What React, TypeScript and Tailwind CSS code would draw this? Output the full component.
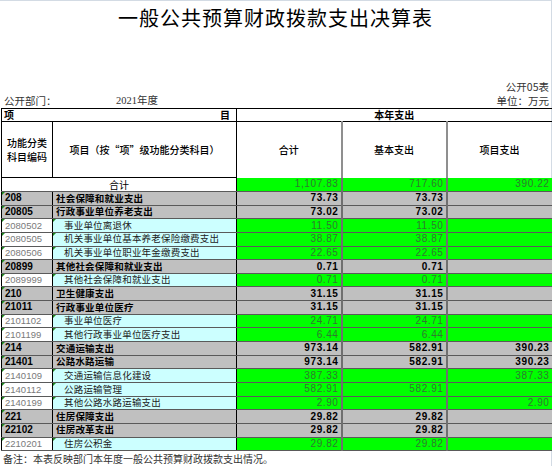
import React from "react";

type Row = {
  code: string;
  name: string;
  total: string;
  basic: string;
  project: string;
  kind: "group" | "item";
};

const rows: Row[] = [
  { code: "208", name: "社会保障和就业支出", total: "73.73", basic: "73.73", project: "", kind: "group" },
  { code: "20805", name: "行政事业单位养老支出", total: "73.02", basic: "73.02", project: "", kind: "group" },
  { code: "2080502", name: "事业单位离退休", total: "11.50", basic: "11.50", project: "", kind: "item" },
  { code: "2080505", name: "机关事业单位基本养老保险缴费支出", total: "38.87", basic: "38.87", project: "", kind: "item" },
  { code: "2080506", name: "机关事业单位职业年金缴费支出", total: "22.65", basic: "22.65", project: "", kind: "item" },
  { code: "20899", name: "其他社会保障和就业支出", total: "0.71", basic: "0.71", project: "", kind: "group" },
  { code: "2089999", name: "其他社会保障和就业支出", total: "0.71", basic: "0.71", project: "", kind: "item" },
  { code: "210", name: "卫生健康支出", total: "31.15", basic: "31.15", project: "", kind: "group" },
  { code: "21011", name: "行政事业单位医疗", total: "31.15", basic: "31.15", project: "", kind: "group" },
  { code: "2101102", name: "事业单位医疗", total: "24.71", basic: "24.71", project: "", kind: "item" },
  { code: "2101199", name: "其他行政事业单位医疗支出", total: "6.44", basic: "6.44", project: "", kind: "item" },
  { code: "214", name: "交通运输支出", total: "973.14", basic: "582.91", project: "390.23", kind: "group" },
  { code: "21401", name: "公路水路运输", total: "973.14", basic: "582.91", project: "390.23", kind: "group" },
  { code: "2140109", name: "交通运输信息化建设", total: "387.33", basic: "", project: "387.33", kind: "item" },
  { code: "2140112", name: "公路运输管理", total: "582.91", basic: "582.91", project: "", kind: "item" },
  { code: "2140199", name: "其他公路水路运输支出", total: "2.90", basic: "", project: "2.90", kind: "item" },
  { code: "221", name: "住房保障支出", total: "29.82", basic: "29.82", project: "", kind: "group" },
  { code: "22102", name: "住房改革支出", total: "29.82", basic: "29.82", project: "", kind: "group" },
  { code: "2210201", name: "住房公积金", total: "29.82", basic: "29.82", project: "", kind: "item" },
];

// 单元格左上角的小绿三角（Excel 提示标记）
function Mark() {
  return (
    <span className="absolute left-0 top-0 w-0 h-0 border-t-[3px] border-r-[3px] border-t-[#1f8a1f] border-r-transparent" />
  );
}

function NumCell({ value, kind, last }: { value: string; kind: Row["kind"]; last?: boolean }) {
  const bg = kind === "group" ? "bg-[#c0c0c0]" : "bg-[#00ff00]";
  const txt = kind === "group" ? "font-bold text-black" : "text-[#2f7a2f]";
  return (
    <td
      className={`${bg} ${txt} border-b border-b-[#5a5a5a] ${last ? "" : "border-r-2 border-r-[#6f6f6f]"} text-right pr-[2px] font-['Liberation_Sans',sans-serif] text-[10px] leading-none tracking-[0.6px]`}
    >
      {value}
    </td>
  );
}

export default function App() {
  const cjk = "font-['Noto_Sans_CJK_SC',sans-serif]";

  return (
    <div className={`w-[552px] h-[466px] bg-white border-r border-t border-[#d3dbe4] ${cjk} text-black`}>
      {/* 标题 */}
      <div className="h-[34px] pt-[5px] text-center text-[20px] leading-[24px] tracking-[1px]">
        一般公共预算财政拨款支出决算表
      </div>

      <div className="h-[44px]" />

      <div className="flex justify-end pr-[2px] text-[10.5px] leading-[15px] text-[#333]">公开05表</div>
      <div className="flex items-end text-[10.5px] leading-[14px] text-[#333] pr-[2px]">
        <span className="pl-[4px] w-[116px]">公开部门：</span>
        <span className="font-['Liberation_Serif','Noto_Sans_CJK_SC',serif]">2021年度</span>
        <span className="ml-auto">单位：万元</span>
      </div>

      <table className="ml-px table-fixed border-collapse w-[550px] border-t border-l border-black">
        <colgroup>
          <col className="w-[51px]" />
          <col className="w-[184px]" />
          <col className="w-[105px]" />
          <col className="w-[105px]" />
          <col className="w-[105px]" />
        </colgroup>
        <thead>
          <tr className="h-[13px] text-[10px] leading-none font-bold">
            <td colSpan={2} className="border-r border-r-black px-[2px]">
              <div className="flex justify-between">
                <span>项</span>
                <span className="pr-[4px]">目</span>
              </div>
            </td>
            <td colSpan={3} className="text-center">本年支出</td>
          </tr>
          <tr className="h-[56px] text-[10px] leading-[14px] font-medium">
            <td className="border-t border-black border-r text-center">
              <div>功能分类</div>
              <div>科目编码</div>
            </td>
            <td className="border-t border-black border-r text-center">项目（按“项”级功能分类科目）</td>
            <td className="border-t border-t-black border-r-2 border-r-[#8f8f8f] text-center">合计</td>
            <td className="border-t border-t-black border-r-2 border-r-[#8f8f8f] text-center">基本支出</td>
            <td className="border-t border-t-black text-center">项目支出</td>
          </tr>
        </thead>
        <tbody>
          <tr className="h-[14px]">
            <td colSpan={2} className="border-t border-black border-r border-b border-b-[#5a5a5a] text-center text-[10px] leading-none">
              合计
            </td>
            <NumCell value="1,107.83" kind="item" />
            <NumCell value="717.60" kind="item" />
            <NumCell value="390.22" kind="item" last />
          </tr>
          {rows.map((r) => {
            const group = r.kind === "group";
            return (
              <tr key={r.code} className="h-[13.65px]">
                <td
                  className={`relative border-b border-b-[#5a5a5a] border-r border-r-black pl-[3px] leading-none font-['Liberation_Sans',sans-serif] ${
                    group ? "bg-[#c0c0c0] font-bold text-[10px] text-black" : "bg-white text-[9.5px] text-[#7a7a7a]"
                  }`}
                >
                  <Mark />
                  {r.code}
                </td>
                <td
                  className={`relative border-b border-b-[#5a5a5a] border-r border-r-black leading-none text-[9.5px] tracking-[0.2px] ${
                    group ? "bg-[#c0c0c0] font-bold pl-[3px]" : "bg-[#ccffff] pl-[11px] text-[#222]"
                  }`}
                >
                  {!group && <Mark />}
                  {r.name}
                </td>
                <NumCell value={r.total} kind={r.kind} />
                <NumCell value={r.basic} kind={r.kind} />
                <NumCell value={r.project} kind={r.kind} last />
              </tr>
            );
          })}
        </tbody>
      </table>

      <div className="pl-[3px] pt-[2px] text-[10px] leading-[12px] text-[#333]">
        备注：本表反映部门本年度一般公共预算财政拨款支出情况。
      </div>
    </div>
  );
}
